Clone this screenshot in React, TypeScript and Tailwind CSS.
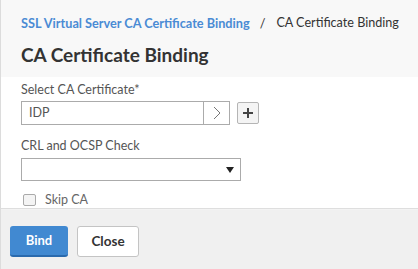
import React from "react";

export default function App() {
  return (
    <div
      className="w-[418px] h-[269px] flex flex-col border-l border-[#dcdcdc] bg-white text-[#333] whitespace-nowrap"
      style={{ fontFamily: 'Lato, "Noto Sans", sans-serif' }}
    >
      <div className="h-[77px] bg-[#f8f8f8] pl-[20px] pt-[13px] flex flex-col">
        <div className="flex items-center text-[12.7px] leading-[20px] h-[20px]">
          <span className="text-[#4a8bd4] font-bold">SSL Virtual Server CA Certificate Binding</span>
          <span className="ml-[10px] mr-[11px] text-[#333]">/</span>
          <span className="text-[#333] text-[12.6px]">CA Certificate Binding</span>
        </div>
        <div className="mt-[9px] text-[19px] leading-[26px] font-bold text-[#333]">CA Certificate Binding</div>
      </div>
      <div className="h-[131px] pl-[20px] pt-[5px] flex flex-col">
        <div className="text-[12.5px] leading-[16px] text-[#555]">Select CA Certificate*</div>
        <div className="mt-[3px] flex items-center">
          <div className="w-[209px] h-[24px] border border-[#ababab] flex">
            <div className="flex-1 flex items-center pl-[7px] text-[12.5px] text-[#555]">IDP</div>
            <div className="w-[26px] border-l border-[#ababab] flex items-center justify-center">
              <svg width="10" height="14" viewBox="0 0 10 14">
                <path d="M2 1 L8 7 L2 13" fill="none" stroke="#777" strokeWidth="1" />
              </svg>
            </div>
          </div>
          <div className="ml-[7px] w-[22px] h-[22px] border border-[#b5b5b5] rounded-[2px] bg-[#f4f4f4] flex items-center justify-center">
            <svg width="10" height="10" viewBox="0 0 10 10">
              <path d="M5 0 V10 M0 5 H10" stroke="#444" strokeWidth="2" />
            </svg>
          </div>
        </div>
        <div className="mt-[13px] text-[12.5px] leading-[16px] text-[#555]">CRL and OCSP Check</div>
        <div className="mt-[4px] w-[220px] h-[26px] border border-[#ababab] flex items-center justify-end pr-[6px]">
          <svg width="8" height="6" viewBox="0 0 8 6">
            <path d="M0 0 H8 L4 6 Z" fill="#222" />
          </svg>
        </div>
        <div className="mt-[11px] flex items-center">
          <div className="ml-[2px] w-[13px] h-[12px] border border-[#aaa] rounded-[2px] bg-[#f4f4f4]" />
          <span className="ml-[9px] text-[12.5px] leading-[16px] text-[#666]">Skip CA</span>
        </div>
      </div>
      <div className="h-[2px] border-t border-[#dedede] bg-[#f3f3f3]" />
      <div className="flex-1 bg-[#f0f0f0] pl-[9px] pt-[16px] flex items-start gap-[9px]">
        <button className="w-[58px] h-[31px] rounded-[3px] bg-[#4189d1] border-b-2 border-[#2a6aad] text-white text-[13px] font-bold">
          Bind
        </button>
        <button className="w-[62px] h-[31px] rounded-[3px] bg-white border border-[#c4c4c4] text-[#333] text-[13.5px] font-bold">
          Close
        </button>
      </div>
    </div>
  );
}
